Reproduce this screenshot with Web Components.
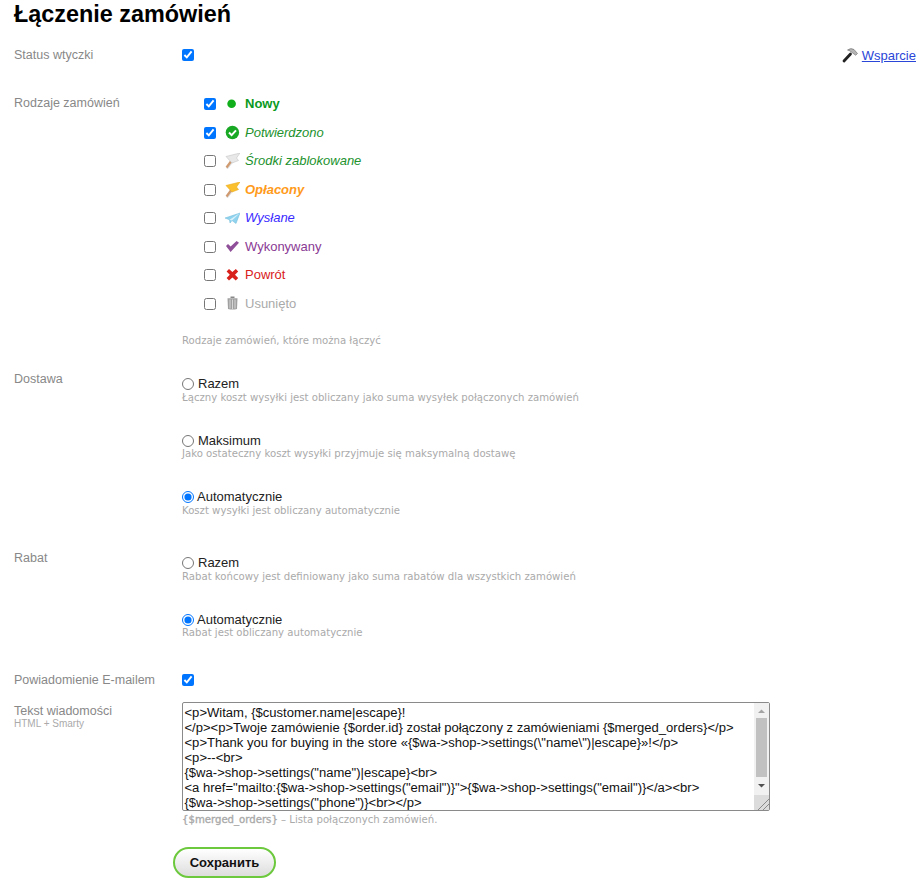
<!DOCTYPE html>
<html lang="pl">
<head>
<meta charset="utf-8">
<title>Łączenie zamówień</title>
<style>
  body {
    margin: 0;
    font-family: "Liberation Sans", Arial, sans-serif;
    font-size: 13px;
    background: #fff;
  }
</style>
</head>
<body>
<merge-settings>
  <settings-field label="Status wtyczki" height="48">
    <div style="display:flex;justify-content:space-between;align-items:center;height:16px">
      <check-mark checked></check-mark>
      <support-link>Wsparcie</support-link>
    </div>
  </settings-field>

  <settings-field label="Rodzaje zamówień" height="276" pull="5">
    <status-option checked icon="dot" color="#0a9a1e" bold>Nowy</status-option>
    <status-option checked icon="ok" color="#22922e" italic>Potwierdzono</status-option>
    <status-option icon="flag-white" color="#22922e" italic>Środki zablokowane</status-option>
    <status-option icon="flag-yellow" color="#ff9a1a" bold italic>Opłacony</status-option>
    <status-option icon="plane" color="#3a2bff" italic>Wysłane</status-option>
    <status-option icon="check" color="#8a3a94">Wykonywany</status-option>
    <status-option icon="cross" color="#d9201c">Powrót</status-option>
    <status-option icon="trash" color="#aaaaaa">Usunięto</status-option>
    <small-hint style="margin-top:17px">Rodzaje zamówień, które można łączyć</small-hint>
  </settings-field>

  <settings-field label="Dostawa" height="179" push="5">
    <radio-option name="shipping" title="Razem">Łączny koszt wysyłki jest obliczany jako suma wysyłek połączonych zamówień</radio-option>
    <radio-option name="shipping" title="Maksimum">Jako ostateczny koszt wysyłki przyjmuje się maksymalną dostawę</radio-option>
    <radio-option name="shipping" title="Automatycznie" checked>Koszt wysyłki jest obliczany automatycznie</radio-option>
  </settings-field>

  <settings-field label="Rabat" height="122" push="5">
    <radio-option name="discount" title="Razem">Rabat końcowy jest definiowany jako suma rabatów dla wszystkich zamówień</radio-option>
    <radio-option name="discount" title="Automatycznie" checked>Rabat jest obliczany automatycznie</radio-option>
  </settings-field>

  <settings-field label="Powiadomienie E-mailem" height="30">
    <div style="display:flex;align-items:center;height:16px"><check-mark checked></check-mark></div>
  </settings-field>

  <settings-field label="Tekst wiadomości" sub="HTML + Smarty">
    <message-box></message-box>
    <small-hint style="margin-top:3px"><b>{$merged_orders}</b> – Lista połączonych zamówień.</small-hint>
    <save-button>Сохранить</save-button>
  </settings-field>
</merge-settings>

<script>
// page wrapper, holds the title and the rows
class MergeSettings extends HTMLElement {
  constructor() {
    super();
    this.attachShadow({ mode: 'open' });
    this.shadowRoot.innerHTML = `
      <style>
        :host { display: block; padding: 0 4px 0 14px; }
        h1 { margin: 0; padding-top: 1px; height: 46px; font-size: 23.4px; line-height: 27px; font-weight: bold; color: #000; }
      </style>
      <h1>Łączenie zamówień</h1>
      <slot></slot>`;
  }
}

class SettingsField extends HTMLElement {
  constructor() {
    super();
    this.attachShadow({ mode: 'open' });
    const sub = this.getAttribute('sub');
    this.shadowRoot.innerHTML = `
      <style>
        :host { display: grid; grid-template-columns: 168px 1fr; }
        .name { color: #888; font-size: 12.5px; line-height: 16px; }
        .with-sub { padding-top: 1px; }
        .sub { color: #aaa; font-size: 10px; line-height: 11px; margin-top: -1px; }
      </style>
      <div class="name ${sub ? 'with-sub' : ''}">${this.getAttribute('label')}${sub ? `<div class="sub">${sub}</div>` : ''}</div>
      <div class="value"><slot></slot></div>`;
    const h = this.getAttribute('height');
    if (h) this.style.height = h + 'px';
    const value = this.shadowRoot.querySelector('.value');
    if (this.hasAttribute('pull')) value.style.marginTop = '-' + this.getAttribute('pull') + 'px';
    if (this.hasAttribute('push')) value.style.marginTop = this.getAttribute('push') + 'px';
  }
}

class CheckMark extends HTMLElement {
  constructor() {
    super();
    this.attachShadow({ mode: 'open' });
    this.shadowRoot.innerHTML = `
      <style>
        :host { display: inline-flex; }
        input { margin: 0; width: 12px; height: 12px; }
      </style>
      <input type="checkbox" ${this.hasAttribute('checked') ? 'checked' : ''}>`;
  }
}

const FLAG_STICK = '<path d="M3 15.5L8.5 8.5" stroke="#ddd" stroke-width="2"/><path d="M2.5 14.5L8 7" stroke="#cf9a70" stroke-width="2.2"/>';
const ICONS = {
  dot: '<circle cx="7.6" cy="7.75" r="4.3" fill="#0fae1a"/>',
  ok: '<circle cx="8.4" cy="7.5" r="6.7" fill="#18a824"/><path d="M5 7.5l2.6 2.6L12 5.4" fill="none" stroke="#fff" stroke-width="2"/>',
  'flag-white': FLAG_STICK + '<path d="M2 3.5L16 0l-3.5 5 2 2.5L8 10z" fill="#e8e8e8" stroke="#c4c4c4" stroke-width=".6"/>',
  'flag-yellow': FLAG_STICK + '<path d="M2 3.5L16 0l-3.5 5 2 2.5L8 10z" fill="#fbc02d" stroke="#eaa91c" stroke-width=".6"/>',
  plane: '<path d="M1 8L16 3l-4 10.5-4-3-2 2.5-.5-3.2z" fill="#8fd3ee" stroke="#6db8d8" stroke-width=".5"/><path d="M5.5 9.8L16 3 8 10.5" fill="#d9f1fa"/>',
  check: '<path d="M2 7l2-2 2.6 2.6L12.6 2 15 3.8 6.6 13z" fill="#8f4f99"/>',
  cross: '<path d="M5 2L8.4 5.1 11.8 2 14.2 4.4 11 7.75 14.2 11.1 11.8 13.5 8.4 10.4 5 13.5 2.6 11.1 5.8 7.75 2.6 4.4z" fill="#d8211b"/>',
  trash: '<path d="M6.5 .5h4V2h-4z" fill="#888"/><path d="M3.5 2.2h10l-.5 10.8q-4.5 1-9 0z" fill="#a0a0a0"/><path d="M6 3.5v9M8.5 3.5v9.5M11 3.5v9" stroke="#dedede" stroke-width=".9"/>'
};

class StatusOption extends HTMLElement {
  constructor() {
    super();
    this.attachShadow({ mode: 'open' });
    const color = this.getAttribute('color');
    this.shadowRoot.innerHTML = `
      <style>
        :host { display: flex; align-items: center; height: 28.5px; padding-left: 22px; }
        svg { margin: 0 5px 0 8px; flex: none; }
        span { color: ${color}; font-size: 13px; margin-top: -1px;
          font-weight: ${this.hasAttribute('bold') ? 'bold' : 'normal'};
          font-style: ${this.hasAttribute('italic') ? 'italic' : 'normal'}; }
      </style>
      <check-mark ${this.hasAttribute('checked') ? 'checked' : ''}></check-mark>
      <svg width="16" height="16" viewBox="0 0 16 16">${ICONS[this.getAttribute('icon')]}</svg>
      <span><slot></slot></span>`;
  }
}

class RadioOption extends HTMLElement {
  constructor() {
    super();
    this.attachShadow({ mode: 'open' });
    this.shadowRoot.innerHTML = `
      <style>
        :host { display: block; height: 56.5px; }
        label { display: flex; align-items: center; height: 16px; color: #222; font-size: 13px; }
        input { margin: 0 4px 0 0; width: 12px; height: 12px; }
        span { margin-top: -1px; }
        .auto { margin-left: -1px; }
      </style>
      <label><input type="radio" name="${this.getAttribute('name')}" ${this.hasAttribute('checked') ? 'checked' : ''}><span class="${this.getAttribute('title') === 'Automatycznie' ? 'auto' : ''}">${this.getAttribute('title')}</span></label>
      <small-hint style="margin-top:-.25px"><slot></slot></small-hint>`;
    this.removeAttribute('title');
  }
}

class SmallHint extends HTMLElement {
  constructor() {
    super();
    this.attachShadow({ mode: 'open' });
    this.shadowRoot.innerHTML = `
      <style>
        :host { display: block; color: #aaa; font-family: "DejaVu Sans", Verdana, sans-serif; font-size: 10.15px; line-height: 12px; }
        ::slotted(b) { font-weight: normal; -webkit-text-stroke: .35px #aaa; }
      </style>
      <slot></slot>`;
  }
}

class SupportLink extends HTMLElement {
  constructor() {
    super();
    this.attachShadow({ mode: 'open' });
    this.shadowRoot.innerHTML = `
      <style>
        :host { display: inline-flex; align-items: center; gap: 4px; }
        a { color: #2a46d8; font-size: 13px; text-decoration: underline; }
      </style>
      <svg width="16" height="16" viewBox="0 0 16 16">
        <path d="M2 14L8.5 7" stroke="#222" stroke-width="2.8" stroke-linecap="round"/>
        <path d="M5.5 3Q9 .5 12 2.5l3.5 4-1.8 1.8L10 5.5Q8 3.5 5.5 3z" fill="#b5b5b5" stroke="#555" stroke-width=".5"/>
      </svg>
      <a href="#"><slot></slot></a>`;
  }
}

class MessageBox extends HTMLElement {
  constructor() {
    super();
    this.attachShadow({ mode: 'open' });
    this.shadowRoot.innerHTML = `
      <style>
        :host { display: block; position: relative; width: 588px; }
        textarea {
          display: block; box-sizing: border-box; width: 588px; height: 109px; margin: 0; padding: 2px 2px 2px 1.5px;
          border: 1px solid #8a8a8a; border-radius: 2px; overflow: hidden; white-space: pre-wrap; resize: none;
          color: #111; font-family: "Liberation Sans", Arial, sans-serif; font-size: 13.05px; line-height: 15px;
        }
        /* scrollbars are hidden in the photograph, so this one lies over the textarea */
        .bar {
          position: absolute; top: 1px; right: 1px; bottom: 1px; width: 15px;
          display: flex; flex-direction: column; background: #f1f1f1;
        }
        .btn { height: 15px; flex: none; }
        .thumb { height: 59px; flex: none; margin: 0 2px 2px; background: #c1c1c1; }
        .grip { margin-top: auto; height: 15px; flex: none; background: #dcdcdc; }
        svg { display: block; }
      </style>
      <textarea>&lt;p&gt;Witam, {$customer.name|escape}!
&lt;/p&gt;&lt;p&gt;Twoje zamówienie {$order.id} został połączony z zamówieniami {$merged_orders}&lt;/p&gt;
&lt;p&gt;Thank you for buying in the store «{$wa-&gt;shop-&gt;settings(\\"name\\")|escape}»!&lt;/p&gt;
&lt;p&gt;--&lt;br&gt;
{$wa-&gt;shop-&gt;settings("name")|escape}&lt;br&gt;
&lt;a href="mailto:{$wa-&gt;shop-&gt;settings("email")}"&gt;{$wa-&gt;shop-&gt;settings("email")}&lt;/a&gt;&lt;br&gt;
{$wa-&gt;shop-&gt;settings("phone")}&lt;br&gt;&lt;/p&gt;</textarea>
      <div class="bar">
        <div class="btn"><svg width="15" height="15"><path d="M4 10h7L7.5 6.5z" fill="#a3a3a3"/></svg></div>
        <div class="thumb"></div>
        <div class="btn"><svg width="15" height="15"><path d="M4 5h7L7.5 8.5z" fill="#505050"/></svg></div>
        <div class="grip"><svg width="15" height="15"><path d="M4 15L15 4M9 15l6-6" stroke="#8a8a8a" fill="none"/></svg></div>
      </div>`;
  }
}

class SaveButton extends HTMLElement {
  constructor() {
    super();
    this.attachShadow({ mode: 'open' });
    this.shadowRoot.innerHTML = `
      <style>
        :host { display: block; margin: 21px 0 0 -9px; }
        button {
          width: 103px; height: 31px; padding: 0; box-sizing: border-box;
          border: 2.5px solid #6cc83c; border-radius: 16px; cursor: pointer;
          background: linear-gradient(#ffffff, #dddddd);
          color: #111; font-family: "Liberation Sans", Arial, sans-serif; font-size: 13px; font-weight: bold;
        }
      </style>
      <button type="button"><slot></slot></button>`;
  }
}

customElements.define('merge-settings', MergeSettings);
customElements.define('settings-field', SettingsField);
customElements.define('check-mark', CheckMark);
customElements.define('status-option', StatusOption);
customElements.define('radio-option', RadioOption);
customElements.define('small-hint', SmallHint);
customElements.define('support-link', SupportLink);
customElements.define('message-box', MessageBox);
customElements.define('save-button', SaveButton);
</script>
</body>
</html>
